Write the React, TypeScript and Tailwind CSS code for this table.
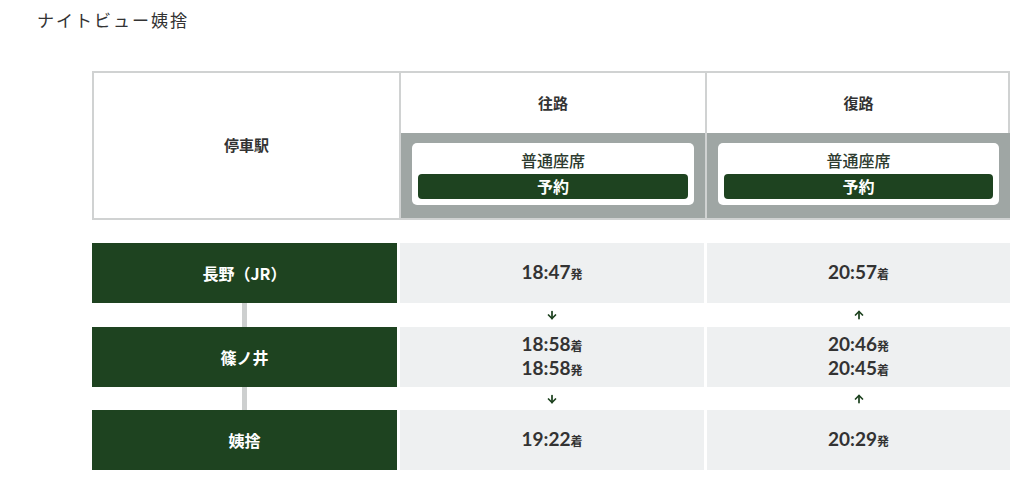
import { ArrowDown, ArrowUp } from 'lucide-react'

type Time = { t: string; k: string }

const stops: { name: string; out: Time[]; back: Time[] }[] = [
  { name: '長野（JR）', out: [{ t: '18:47', k: '発' }], back: [{ t: '20:57', k: '着' }] },
  {
    name: '篠ノ井',
    out: [
      { t: '18:58', k: '着' },
      { t: '18:58', k: '発' },
    ],
    back: [
      { t: '20:46', k: '発' },
      { t: '20:45', k: '着' },
    ],
  },
  { name: '姨捨', out: [{ t: '19:22', k: '着' }], back: [{ t: '20:29', k: '発' }] },
]

const jp = { fontFamily: '"Noto Sans CJK JP", sans-serif' }
const num = { fontFamily: 'Lato, "Noto Sans CJK JP", sans-serif' }

function SeatCard() {
  return (
    <div className="bg-[#9fa6a4] px-[11px] pt-[10px] pb-[11px] h-full">
      <div className="bg-white rounded-[5px] px-[6px] pt-[6px] pb-[6px] flex flex-col items-center">
        <div className="text-[16px] leading-[22px] text-[#2d3b2f] font-medium mb-[3px]">普通座席</div>
        <button className="w-full h-[25px] rounded-[4px] bg-[#1e4320] text-white text-[16px] font-bold leading-[25px]">
          予約
        </button>
      </div>
    </div>
  )
}

function Times({ list }: { list: Time[] }) {
  return (
    <div className="bg-[#eef0f1] h-[60px] flex flex-col items-center justify-center">
      {list.map((x, i) => (
        <div key={i} className="leading-[22px] text-[#333] flex items-baseline">
          <span className="text-[19px] font-bold" style={num}>{x.t}</span>
          <span className="text-[12px] font-bold" style={jp}>{x.k}</span>
        </div>
      ))}
    </div>
  )
}

export default function App() {
  return (
    <div className="bg-white w-[1024px] h-[482px] overflow-hidden" style={jp}>
      <h1
        className="pl-[37px] pt-[9px] text-[17px] leading-[26px] tracking-[2px] text-[#333] font-normal"
        style={{ fontFamily: '"Liberation Serif", "Noto Sans CJK JP", serif' }}
      >
        ナイトビュー姨捨
      </h1>

      <div className="ml-[92px] w-[918px] mt-[36px]">
        <div className="border-2 border-[#d0d2d2] grid grid-cols-[305px_2px_304px_2px_303px] h-[149px]">
          <div className="bg-white flex items-center justify-center text-[15px] font-bold text-[#333]">停車駅</div>
          <div className="bg-[#d0d2d2]" />
          <div className="flex flex-col">
            <div className="h-[60px] flex items-center justify-center text-[15px] font-bold text-[#333]">往路</div>
            <div className="flex-1">
              <SeatCard />
            </div>
          </div>
          <div className="bg-[#d0d2d2]" />
          <div className="flex flex-col">
            <div className="h-[60px] flex items-center justify-center text-[15px] font-bold text-[#333]">復路</div>
            <div className="flex-1">
              <SeatCard />
            </div>
          </div>
        </div>

        <div className="mt-[23px] grid grid-cols-[305px_304px_303px] gap-x-[3px]">
          {stops.map((s, i) => (
            <div key={s.name} className="contents">
              {i > 0 && (
                <>
                  <div className={`${i === 1 ? 'h-[24px]' : 'h-[23px]'} flex justify-center`}>
                    <div className="w-[5px] h-full bg-[#cdcfcf]" />
                  </div>
                  <div className="flex items-center justify-center">
                    <ArrowDown size={12} strokeWidth={3.5} className="text-[#1e4320]" />
                  </div>
                  <div className="flex items-center justify-center">
                    <ArrowUp size={12} strokeWidth={3.5} className="text-[#1e4320]" />
                  </div>
                </>
              )}
              <div className="bg-[#1e4320] h-[60px] flex items-center justify-center text-white text-[16px] font-bold">
                {s.name}
              </div>
              <Times list={s.out} />
              <Times list={s.back} />
            </div>
          ))}
        </div>
      </div>
    </div>
  )
}
